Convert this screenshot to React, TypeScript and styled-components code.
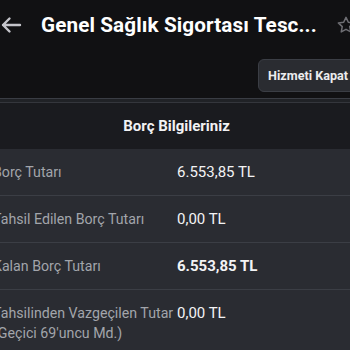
import * as React from "react";
import styled, { createGlobalStyle } from "styled-components";

const GlobalStyle = createGlobalStyle`
  html, body {
    margin: 0;
    padding: 0;
    background: #111113;
    font-family: Roboto, "Noto Sans", "Liberation Sans", sans-serif;
    overflow: hidden;
  }
`;

const Page = styled.div`
  width: 350px;
  height: 350px;
  overflow: hidden;
  background: #111113;
  display: flex;
  flex-direction: column;
`;

const TopBar = styled.header`
  height: 50px;
  display: flex;
  align-items: center;
  flex-shrink: 0;
`;

const BackButton = styled.button`
  width: 24px;
  height: 24px;
  padding: 0;
  margin-left: -1px;
  border: none;
  background: transparent;
  display: flex;
  align-items: center;
  justify-content: center;
  color: #c4c4ca;
`;

const Title = styled.h1`
  margin: 0 0 0 18px;
  font-size: 20.7px;
  font-weight: 700;
  color: #ffffff;
  white-space: nowrap;
  flex: 1;
  letter-spacing: 0.1px;
`;

const StarButton = styled.span`
  width: 20px;
  height: 20px;
  margin-right: -6px;
  display: flex;
  color: #6e6e73;
  flex-shrink: 0;
`;

const ActionRow = styled.div`
  display: flex;
  justify-content: flex-end;
  padding-top: 9px;
  margin-right: -8px;
`;

const CloseButton = styled.button`
  height: 33px;
  padding: 0 9px;
  border: 1px solid #3b3e45;
  border-radius: 6px;
  background: #2a2c31;
  color: #ececee;
  font-family: inherit;
  font-size: 12.6px;
  font-weight: 700;
  white-space: nowrap;
`;

const Card = styled.section`
  margin-top: 6px;
  margin-left: -7px;
  border-top: 1px solid #3a3d44;
  display: flex;
  flex-direction: column;
`;

const Band = styled.div`
  height: 3px;
  background: #202226;
  border-bottom: 1px solid #34363c;
`;

const CardHeader = styled.div`
  height: 46px;
  background: #1a1b1f;
  display: flex;
  align-items: center;
  justify-content: center;
  padding-left: 10px;
  color: #f2f2f4;
  font-size: 15px;
  font-weight: 700;
`;

const Rows = styled.div`
  background: #2a2c32;
`;

const Row = styled.div`
  display: grid;
  grid-template-columns: 184px 1fr;
  padding: 13px 0 13px;
  border-top: 1px solid #3b3e45;
  line-height: 20px;

  &:first-child {
    border-top: none;
  }
`;

const Label = styled.span`
  color: #a2a5ab;
  font-size: 14.2px;
`;

const Value = styled.span<{ $strong?: boolean }>`
  color: #f3f3f5;
  font-size: 15px;
  font-weight: ${(p) => (p.$strong ? 700 : 400)};
`;

const rows = [
  { label: "Borç Tutarı", value: "6.553,85 TL" },
  { label: "Tahsil Edilen Borç Tutarı", value: "0,00 TL" },
  { label: "Kalan Borç Tutarı", value: "6.553,85 TL", strong: true },
  { label: "Tahsilinden Vazgeçilen Tutar (Geçici 69'uncu Md.)", value: "0,00 TL" },
];

export default function App() {
  return (
    <>
      <GlobalStyle />
      <Page>
        <TopBar>
          <BackButton aria-label="Geri">
            <svg width="24" height="24" viewBox="0 0 24 24" fill="none">
              <path d="M21 12H4M10.5 5.5L4 12l6.5 6.5" stroke="currentColor" strokeWidth="2.4" strokeLinecap="round" strokeLinejoin="round" />
            </svg>
          </BackButton>
          <Title>Genel Sağlık Sigortası Tesc...</Title>
          <StarButton>
            <svg width="20" height="20" viewBox="0 0 24 24" fill="none">
              <path d="M12 2.8l2.8 5.9 6.4.8-4.7 4.4 1.2 6.4L12 17.2l-5.7 3.1 1.2-6.4-4.7-4.4 6.4-.8z" stroke="currentColor" strokeWidth="1.8" strokeLinejoin="round" />
            </svg>
          </StarButton>
        </TopBar>
        <ActionRow>
          <CloseButton>Hizmeti Kapat</CloseButton>
        </ActionRow>
        <Card>
          <Band />
          <CardHeader>Borç Bilgileriniz</CardHeader>
          <Rows>
            {rows.map((r) => (
              <Row key={r.label}>
                <Label>{r.label}</Label>
                <Value $strong={r.strong}>{r.value}</Value>
              </Row>
            ))}
          </Rows>
        </Card>
      </Page>
    </>
  );
}
